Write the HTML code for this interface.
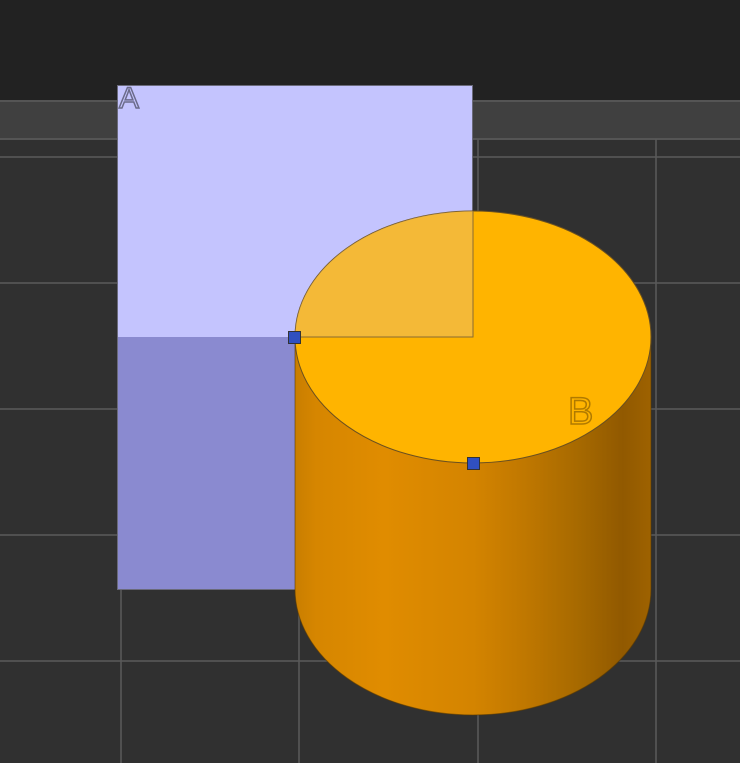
<!DOCTYPE html>
<html><head><style>
html,body{margin:0;padding:0;background:#303030;width:740px;height:763px;overflow:hidden}
svg{display:block}
</style></head><body>
<svg width="740" height="763" viewBox="0 0 740 763" xmlns="http://www.w3.org/2000/svg">
<defs>
<linearGradient id="side" x1="295" y1="0" x2="651" y2="0" gradientUnits="userSpaceOnUse">
<stop offset="0" stop-color="#c97e00"/>
<stop offset="0.06" stop-color="#d68600"/>
<stop offset="0.25" stop-color="#e08c00"/>
<stop offset="0.5" stop-color="#d48400"/>
<stop offset="0.65" stop-color="#bf7700"/>
<stop offset="0.8" stop-color="#a66900"/>
<stop offset="0.92" stop-color="#915900"/>
<stop offset="1" stop-color="#9e6200"/>
</linearGradient>
</defs>
<rect x="0" y="0" width="740" height="101" fill="#222"/>
<rect x="0" y="101" width="740" height="38" fill="#404040"/>
<rect x="0" y="100" width="740" height="2" fill="#555"/>
<rect x="0" y="138" width="740" height="2" fill="#555"/>
<g stroke="#5a5a5a" stroke-width="1.5">
<line x1="0" y1="157" x2="740" y2="157"/>
<line x1="0" y1="283" x2="740" y2="283"/>
<line x1="0" y1="409" x2="740" y2="409"/>
<line x1="0" y1="535" x2="740" y2="535"/>
<line x1="0" y1="661" x2="740" y2="661"/>
<line x1="121" y1="139" x2="121" y2="763"/>
<line x1="299" y1="139" x2="299" y2="763"/>
<line x1="478" y1="139" x2="478" y2="763"/>
<line x1="656" y1="139" x2="656" y2="763"/>
</g>
<rect x="117" y="85" width="355" height="252" fill="#c4c4fe"/>
<rect x="117" y="337" width="355" height="252" fill="#8a8ad0"/>
<rect x="117.5" y="85.5" width="355" height="504" fill="none" stroke="#6a6a7a" stroke-width="1"/>
<text x="119" y="108" font-family="Liberation Sans, sans-serif" font-size="30" fill="none" stroke="#6b6b8a" stroke-width="1.5">A</text>
<path d="M295 337 V589 A178 126 0 0 0 651 589 V337 Z" fill="url(#side)"/>
<path d="M295 337 V589 A178 126 0 0 0 651 589 V337" fill="none" stroke="#5a3a00" stroke-width="1" opacity="0.6"/>
<ellipse cx="473" cy="337" rx="178" ry="126" fill="#ffb400" stroke="#6a5020" stroke-width="1"/>
<path d="M473 337 H295 A178 126 0 0 1 473 211 Z" fill="#e6bf7a" opacity="0.45"/>
<path d="M473 211 V337 H295" fill="none" stroke="#8a6a30" stroke-width="1"/>
<text x="568" y="424" font-family="Liberation Sans, sans-serif" font-size="38" fill="none" stroke="#b07a00" stroke-width="1.5">B</text>
<rect x="288.5" y="331.5" width="12" height="12" fill="#3050c0" stroke="#333" stroke-width="1"/>
<rect x="467.5" y="457.5" width="12" height="12" fill="#3050c0" stroke="#333" stroke-width="1"/>
</svg>
</body></html>
